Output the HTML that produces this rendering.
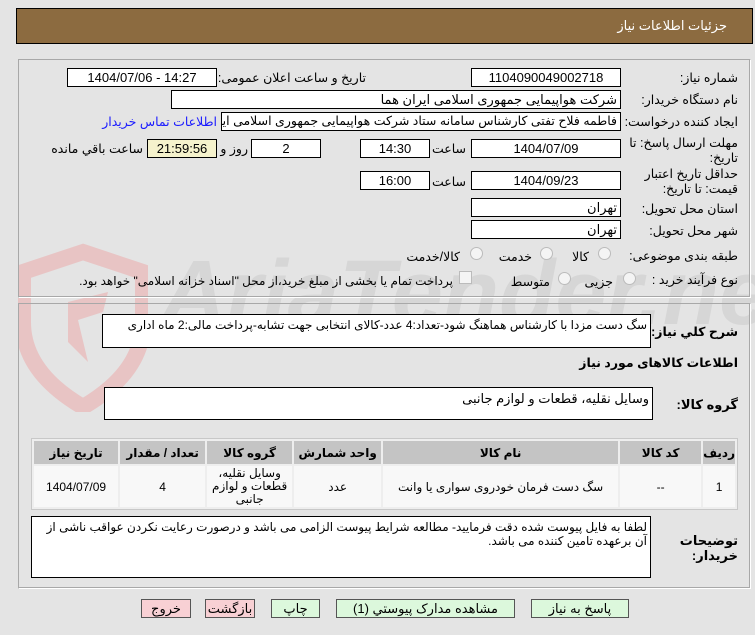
<!DOCTYPE html>
<html><head><meta charset="utf-8"><style>
*{box-sizing:border-box;margin:0;padding:0}
html,body{overflow:hidden}
body{width:755px;height:635px;background:#e4e4e4;font-family:"Liberation Sans","DejaVu Sans",sans-serif;font-size:12px;color:#000;position:relative;overflow:hidden}
.a{position:absolute}
.box{position:absolute;background:#fff;border:1px solid #000;height:19px;line-height:17px;text-align:center;font-size:13px}
.r{direction:rtl;text-align:right;padding-right:3px}
.lbl{position:absolute;direction:rtl;text-align:right;white-space:nowrap;font-size:12.5px}
.panel{position:absolute;border:1px solid #a8a8a8;border-right-color:#fff;border-bottom-color:#fff;box-shadow:inset -1px -1px 0 #a8a8a8}
.rad{position:absolute;width:13px;height:13px;border-radius:50%;border:1px solid #bbb;background:#f4f4f4}
.btn{position:absolute;top:599px;height:19px;border:1px solid #555;font-size:13px;text-align:center;line-height:17px;direction:rtl}
table{border-collapse:separate;border-spacing:2px}
td,th{font-size:12px;text-align:center}
</style></head><body>
<div class="a" style="left:16px;top:8px;width:737px;height:36px;background:#8c6b40;border:1px solid #000"></div>
<div class="lbl" style="right:28px;top:18px;color:#fff;font-size:13px">جزئیات اطلاعات نیاز</div>

<!-- watermark -->
<div class="a" style="left:0;top:0;width:755px;height:635px;overflow:hidden">
<svg class="a" style="left:18px;top:242px" width="130" height="170" viewBox="0 0 130 170"><path d="M65 10 L125 30 L125 80 Q125 130 65 165 Q5 130 5 80 L5 30 Z" fill="none" stroke="#e8c4c4" stroke-width="16"/><path d="M50 60 L90 50 L85 70 L60 78 L70 120 L50 100 Z" fill="#e8c4c4"/></svg>
<div class="a" style="left:160px;top:238px;font-size:92px;font-weight:bold;color:#d6d6d6;font-style:italic;white-space:nowrap;line-height:110px">AriaTender.net</div>
</div>

<div class="panel" style="left:18px;top:59px;width:733px;height:239px"></div>
<div class="panel" style="left:18px;top:303px;width:733px;height:286px"></div>

<div class="lbl" style="right:17px;top:70px">شماره نیاز:</div>
<div class="box" style="left:471px;top:68px;width:150px">1104090049002718</div>
<div class="lbl" style="right:389px;top:70px">تاریخ و ساعت اعلان عمومی:</div>
<div class="box" style="left:67px;top:68px;width:150px">1404/07/06 - 14:27</div>

<div class="lbl" style="right:17px;top:92px">نام دستگاه خریدار:</div>
<div class="box r" style="left:171px;top:90px;width:450px">شرکت هواپیمایی جمهوری اسلامی ایران هما</div>

<div class="lbl" style="right:17px;top:114px">ایجاد کننده درخواست:</div>
<div class="box r" style="left:221px;top:112px;width:400px;overflow:hidden;white-space:nowrap;font-size:12.5px">فاطمه فلاح تفتی کارشناس سامانه ستاد شرکت هواپیمایی جمهوری اسلامی ایران</div>
<div class="lbl" style="right:538px;top:114px;color:#1a1aff">اطلاعات تماس خریدار</div>

<div class="lbl" style="right:17px;top:136px;line-height:15px">مهلت ارسال پاسخ: تا<br>تاریخ:</div>
<div class="box" style="left:471px;top:139px;width:150px">1404/07/09</div>
<div class="lbl" style="right:289px;top:141px">ساعت</div>
<div class="box" style="left:360px;top:139px;width:70px">14:30</div>
<div class="box" style="left:251px;top:139px;width:70px">2</div>
<div class="lbl" style="right:507px;top:141px">روز و</div>
<div class="box" style="left:147px;top:139px;width:70px;background:#f5f2cc">21:59:56</div>
<div class="lbl" style="right:612px;top:141px">ساعت باقي مانده</div>

<div class="lbl" style="right:17px;top:167px;line-height:15px">حداقل تاریخ اعتبار<br>قیمت: تا تاریخ:</div>
<div class="box" style="left:471px;top:171px;width:150px">1404/09/23</div>
<div class="lbl" style="right:289px;top:174px">ساعت</div>
<div class="box" style="left:360px;top:171px;width:70px">16:00</div>

<div class="lbl" style="right:17px;top:201px">استان محل تحویل:</div>
<div class="box r" style="left:471px;top:198px;width:150px">تهران</div>
<div class="lbl" style="right:17px;top:223px">شهر محل تحویل:</div>
<div class="box r" style="left:471px;top:220px;width:150px">تهران</div>

<div class="lbl" style="right:17px;top:248px">طبقه بندی موضوعی:</div>
<div class="rad" style="left:598px;top:247px"></div><div class="lbl" style="right:166px;top:249px">کالا</div>
<div class="rad" style="left:540px;top:247px"></div><div class="lbl" style="right:223px;top:249px">خدمت</div>
<div class="rad" style="left:470px;top:247px"></div><div class="lbl" style="right:295px;top:249px">کالا/خدمت</div>

<div class="lbl" style="right:17px;top:272px">نوع فرآیند خرید :</div>
<div class="rad" style="left:623px;top:272px"></div><div class="lbl" style="right:142px;top:274px">جزیی</div>
<div class="rad" style="left:558px;top:272px"></div><div class="lbl" style="right:205px;top:274px">متوسط</div>
<div class="a" style="left:459px;top:271px;width:13px;height:13px;border:1px solid #bbb;background:#f4f4f4"></div>
<div class="lbl" style="right:302px;top:274px;font-size:12px">پرداخت تمام یا بخشی از مبلغ خرید،از محل "اسناد خزانه اسلامی" خواهد بود.</div>

<div class="lbl" style="right:17px;top:324px;font-weight:bold">شرح کلي نیاز:</div>
<div class="box r" style="left:102px;top:314px;width:549px;height:34px;text-align:right;padding-top:2px;white-space:nowrap;overflow:hidden;font-size:12px">سگ دست مزدا با کارشناس هماهنگ شود-تعداد:4 عدد-کالای انتخابی جهت تشابه-پرداخت مالی:2 ماه اداری</div>
<div class="lbl" style="right:17px;top:355px;font-weight:bold">اطلاعات کالاهای مورد نیاز</div>
<div class="lbl" style="right:17px;top:397px;font-weight:bold;font-size:13px">گروه کالا:</div>
<div class="box r" style="left:104px;top:387px;width:549px;height:33px;text-align:right;padding-top:2px">وسایل نقلیه، قطعات و لوازم جانبی</div>

<div class="a" style="left:31px;top:438px;width:707px;height:72px;border:1px solid #c8c8c8;background:#eee">
<table style="width:705px;direction:rtl;position:absolute;left:0;top:0">
<tr style="background:#c4c4c4;height:23px"><th style="width:27px">ردیف</th><th style="width:81px">کد کالا</th><th style="width:235px">نام کالا</th><th style="width:87px">واحد شمارش</th><th style="width:85px">گروه کالا</th><th style="width:85px">تعداد / مقدار</th><th>تاریخ نیاز</th></tr>
<tr style="background:#f8f8f8;height:41px"><td>1</td><td>--</td><td>سگ دست فرمان خودروی سواری یا وانت</td><td>عدد</td><td style="line-height:13px">وسایل نقلیه، قطعات و لوازم جانبی</td><td>4</td><td>1404/07/09</td></tr>
</table></div>

<div class="lbl" style="right:17px;top:533px;font-weight:bold;line-height:15px;font-size:13px">توضیحات<br>خریدار:</div>
<div class="box r" style="left:31px;top:516px;width:620px;height:62px;text-align:right;line-height:14px;padding-top:3px;font-size:12px">لطفا به فایل پیوست شده دقت فرمایید- مطالعه شرایط پیوست الزامی می باشد و درصورت رعایت نکردن عواقب ناشی از آن برعهده تامین کننده می باشد.</div>

<div class="btn" style="left:141px;width:50px;background:#f8d0d4">خروج</div>
<div class="btn" style="left:205px;width:50px;background:#f8d0d4">بازگشت</div>
<div class="btn" style="left:271px;width:49px;background:#dcf8dc">چاپ</div>
<div class="btn" style="left:336px;width:179px;background:#dcf8dc">مشاهده مدارک پیوستي (1)</div>
<div class="btn" style="left:531px;width:98px;background:#dcf8dc">پاسخ به نیاز</div>
</body></html>
